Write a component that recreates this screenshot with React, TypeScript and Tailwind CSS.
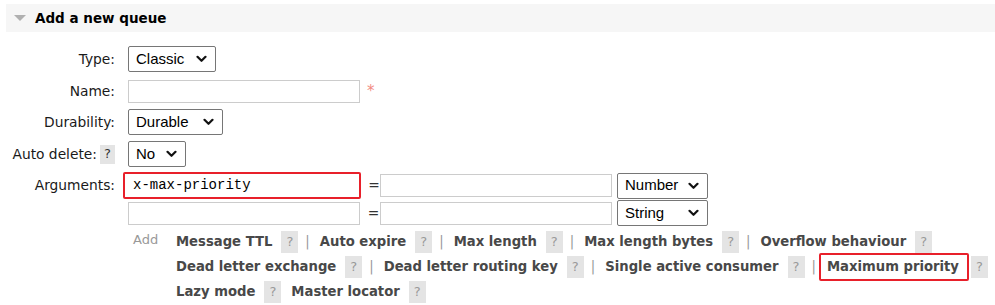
import React from "react";

const Chevron = () => (
  <svg width="11" height="8" viewBox="0 0 11 8" className="shrink-0">
    <path d="M1.5 1.8 L5.5 5.8 L9.5 1.8" fill="none" stroke="#111" strokeWidth="2.2" strokeLinecap="round" strokeLinejoin="round" />
  </svg>
);

const Select = ({ value, w }: { value: string; w: string }) => (
  <div className={`${w} h-[26px] border border-[#767676] rounded-[2px] bg-white flex items-center justify-between pl-[7px] pr-[8px] text-[15px] text-black font-['Liberation_Sans',Arial,sans-serif]`}>
    <span>{value}</span>
    <Chevron />
  </div>
);

const Input = ({ w }: { w: string }) => (
  <div className={`${w} h-[23px] border border-[#cccccc] bg-white`}></div>
);

const Help = () => (
  <span className="inline-flex items-center justify-center w-[17px] h-[22px] bg-[#e4e4e4] text-[#999] text-[13px] font-normal">?</span>
);

const Sep = ({ tight }: { tight?: boolean }) => (
  <span className={`text-[#999] font-normal ml-[7px] ${tight ? "mr-[3px]" : "mr-[10px]"}`}>|</span>
);

const Item = ({ label, last, tight }: { label: string; last?: boolean; tight?: boolean }) => (
  <span className="inline-flex items-center whitespace-nowrap">
    <span className="font-bold text-[#484848]">{label}</span>
    <span className="ml-[9px]"><Help /></span>
    {!last && <Sep tight={tight} />}
  </span>
);

export default function App() {
  return (
    <div className="w-[995px] h-[305px] bg-white font-['DejaVu_Sans',Verdana,sans-serif] text-[13.8px] text-[#1a1a1a] overflow-hidden">
      <div className="pt-[4px] pl-[6px]">
        <div className="h-[28px] bg-[#f6f6f6] flex items-center">
          <svg width="12" height="7" viewBox="0 0 12 7" className="ml-[8px] mr-[9px]">
            <path d="M0 0 L12 0 L6 6 Z" fill="#b0b0b0" />
          </svg>
          <span className="font-bold text-[13.5px] text-black">Add a new queue</span>
        </div>
      </div>

      <div className="mt-[14px] flex flex-col">
        <div className="flex items-center h-[26px]">
          <div className="w-[116px] text-right pr-[1px]">Type:</div>
          <div className="ml-[12px]"><Select value="Classic" w="w-[88px]" /></div>
        </div>
        <div className="flex items-center h-[24px] mt-[7px]">
          <div className="w-[116px] text-right pr-[1px]">Name:</div>
          <div className="ml-[12px] flex items-center">
            <Input w="w-[232px]" />
            <span className="ml-[7px] text-[#f28b82] text-[15px] leading-none">*</span>
          </div>
        </div>
        <div className="flex items-center h-[26px] mt-[6px]">
          <div className="w-[116px] text-right pr-[1px]">Durability:</div>
          <div className="ml-[12px]"><Select value="Durable" w="w-[95px]" /></div>
        </div>
        <div className="flex items-center h-[26px] mt-[6px]">
          <div className="w-[116px] flex items-center justify-end pr-[1px] whitespace-nowrap">
            <span className="mr-[3px]">Auto delete:</span>
            <span className="inline-flex items-center justify-center w-[15px] h-[19px] bg-[#e4e4e4] text-[#333] text-[13px]">?</span>
          </div>
          <div className="ml-[12px]"><Select value="No" w="w-[58px]" /></div>
        </div>
        <div className="flex items-center h-[27px] mt-[5px]">
          <div className="w-[116px] text-right pr-[1px]">Arguments:</div>
          <div className="ml-[7px] flex items-center">
            <div className="w-[238px] h-[27px] border-2 border-[#e8202a] rounded-[2px] bg-white flex items-center pl-[8px]">
              <span className="font-['Liberation_Mono','Courier_New',monospace] text-[14px] text-black">x-max-priority</span>
            </div>
            <span className="ml-[7px] w-[12px] text-center text-[#333]">=</span>
            <Input w="w-[232px]" />
            <span className="ml-[5px]"><Select value="Number" w="w-[91px]" /></span>
          </div>
        </div>
        <div className="flex items-center h-[26px] mt-[1px]">
          <div className="w-[116px]"></div>
          <div className="ml-[12px] flex items-center">
            <Input w="w-[232px]" />
            <span className="ml-[7px] w-[13px] text-center text-[#333]">=</span>
            <Input w="w-[232px]" />
            <span className="ml-[5px]"><Select value="String" w="w-[91px]" /></span>
          </div>
        </div>
        <div className="flex mt-[3px]">
          <div className="w-[133px]"></div>
          <div className="w-[43px] text-[#999] text-[13px] pt-[1px]">Add</div>
          <div className="flex flex-col text-[13.2px]">
            <div className="flex items-center h-[25px]">
              <Item label="Message TTL" />
              <Item label="Auto expire" />
              <Item label="Max length" />
              <Item label="Max length bytes" />
              <Item label="Overflow behaviour" last />
            </div>
            <div className="flex items-center h-[25px]">
              <Item label="Dead letter exchange" />
              <Item label="Dead letter routing key" />
              <Item label="Single active consumer" tight />
              <span className="inline-flex items-center whitespace-nowrap">
                <span className="border-2 border-[#e8202a] rounded-[2px] pl-[6px] pr-[8px] h-[28px] flex items-center font-bold text-[#484848]">Maximum priority</span>
                <span className="ml-[2px]"><Help /></span>
              </span>
            </div>
            <div className="flex items-center h-[25px]">
              <span className="inline-flex items-center whitespace-nowrap">
                <span className="font-bold text-[#484848]">Lazy mode</span>
                <span className="ml-[9px]"><Help /></span>
              </span>
              <span className="inline-flex items-center whitespace-nowrap ml-[10px]">
                <span className="font-bold text-[#484848]">Master locator</span>
                <span className="ml-[9px]"><Help /></span>
              </span>
            </div>
          </div>
        </div>
      </div>
    </div>
  );
}
